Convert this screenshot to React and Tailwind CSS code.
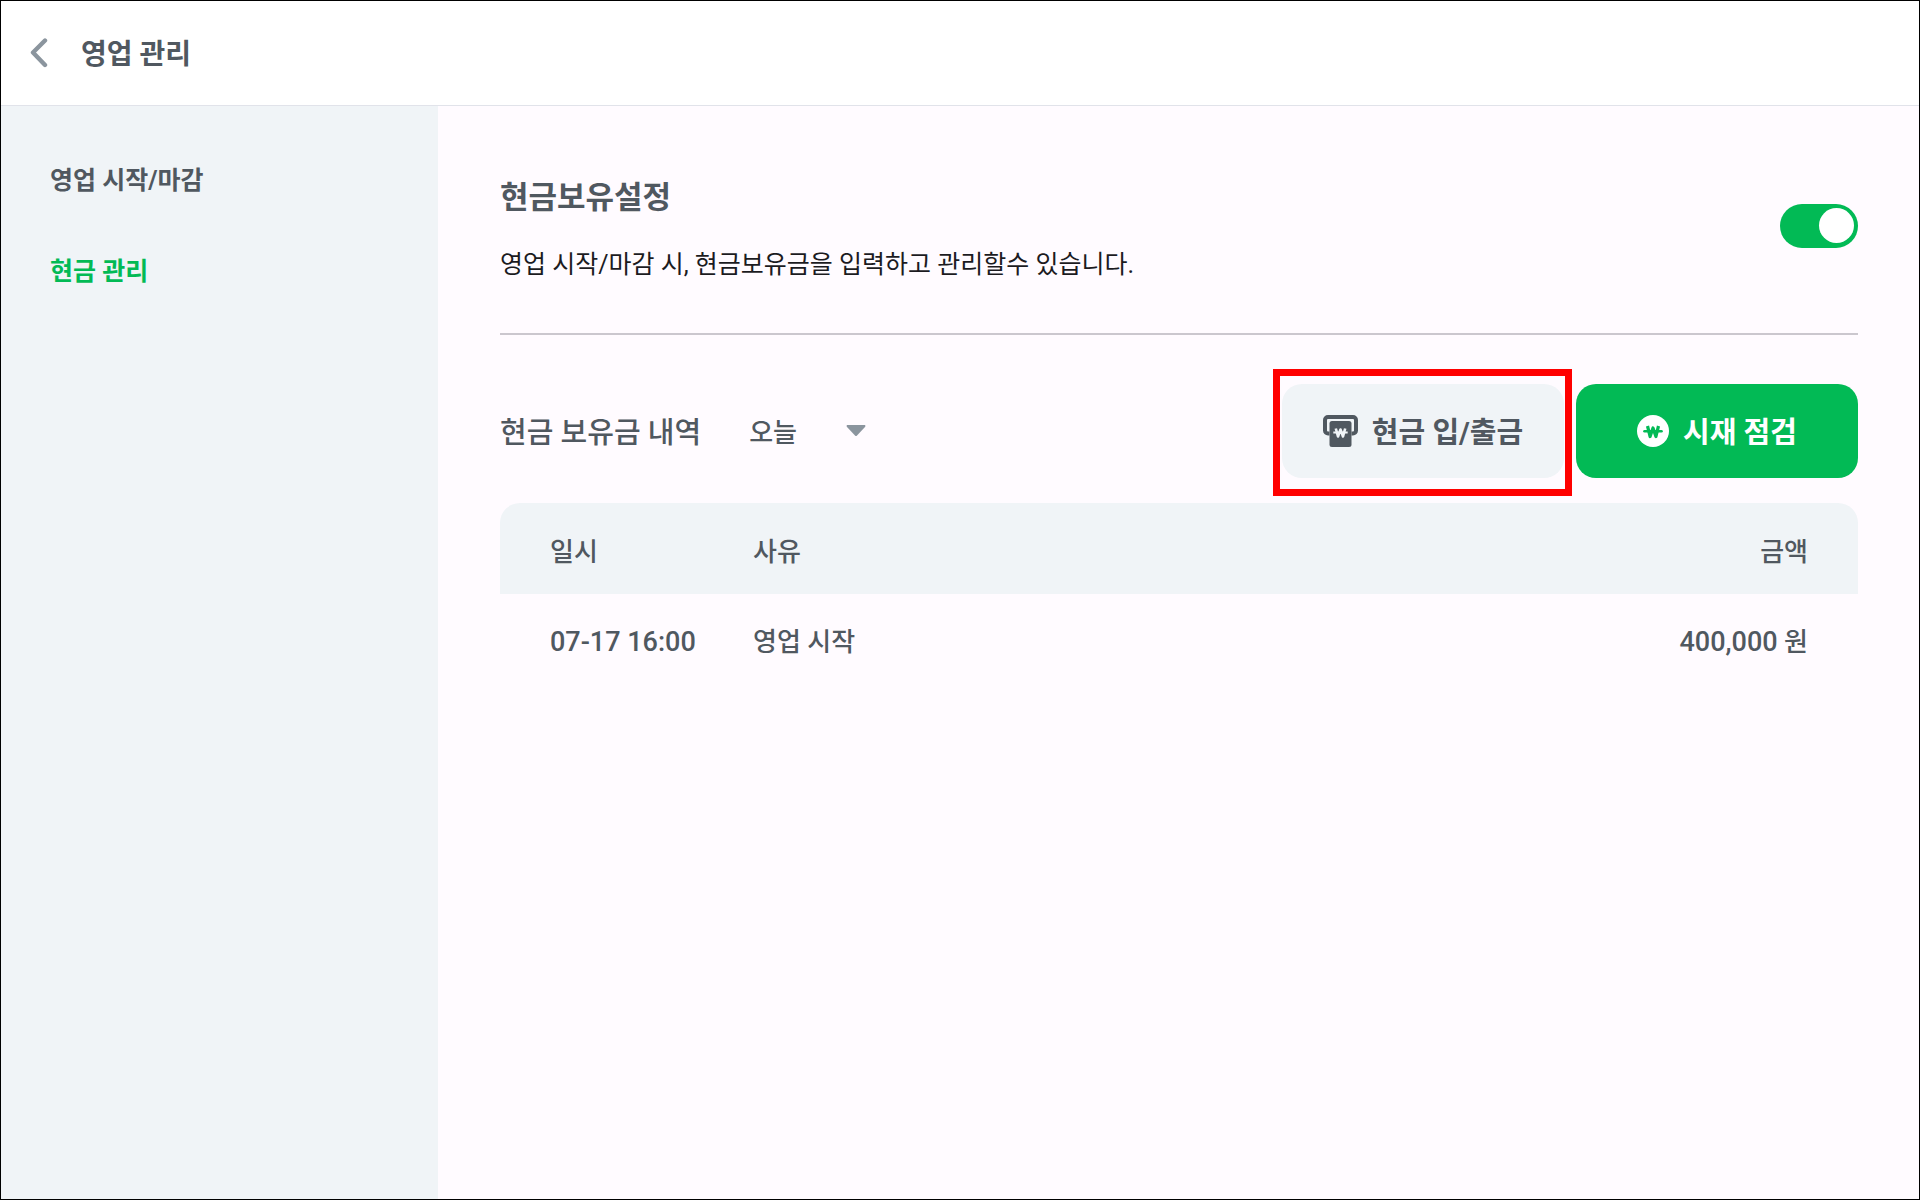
/**
 * Business management screen, cash management tab
 * Cash-holding toggle on top, history of held cash below
 */

import React, { useState } from 'react';

const MENU = [
  { id: 'open-close', label: '영업 시작/마감' },
  { id: 'cash', label: '현금 관리' },
];

const HISTORY = [{ date: '07-17 16:00', reason: '영업 시작', amount: '400,000', unit: '원' }];

function BackIcon() {
  return (
    <svg width="20" height="30" viewBox="0 0 20 30" fill="none" aria-hidden="true">
      <path d="M16 2.500 4 14.500l12 12.500" stroke="#8b959e" strokeWidth="4.400" strokeLinecap="round" strokeLinejoin="round" />
    </svg>
  );
}

function CashSlotIcon() {
  return (
    <svg width="35" height="32" viewBox="0 0 35 32" fill="none" aria-hidden="true">
      <path
        d="M6.500 18.500H5a3 3 0 0 1-3-3V5a3 3 0 0 1 3-3h25a3 3 0 0 1 3 3v10.500a3 3 0 0 1-3 3h-1.500"
        stroke="#505860"
        strokeWidth="4"
      />
      <rect x="6.500" y="6" width="22" height="26" rx="2.500" fill="#505860" />
      <path d="m12.800 13.500 2.200 8 2.500-7 2.500 7 2.200-8" stroke="#f0f4f7" strokeWidth="2.600" strokeLinejoin="round" />
      <path d="M10.300 17.500h14.400" stroke="#f0f4f7" strokeWidth="2" />
    </svg>
  );
}

function WonCoinIcon() {
  return (
    <svg width="32" height="32" viewBox="0 0 32 32" fill="none" aria-hidden="true">
      <circle cx="16" cy="16" r="16" fill="#fff" />
      <path d="m10.500 11 2.600 10.500 2.900-8.500 2.900 8.500 2.600-10.500" stroke="#02ba55" strokeWidth="3.200" strokeLinejoin="round" />
      <path d="M7.500 16.300h17" stroke="#02ba55" strokeWidth="2.600" strokeLinecap="round" />
    </svg>
  );
}

function Header() {
  return (
    <header className="flex h-[105px] items-center border-b border-[#e1e3ea] bg-white pl-7">
      <button type="button" aria-label="뒤로" className="cursor-pointer">
        <BackIcon />
      </button>
      <h1 className="pt-1 pl-8 text-[28px] leading-10 font-bold">영업 관리</h1>
    </header>
  );
}

function Sidebar({ active, onSelect }) {
  return (
    <nav className="w-[437px] shrink-0 bg-[#f0f4f7] px-[49px] pt-[55px]">
      <ul className="flex flex-col gap-[51px]">
        {MENU.map((item) => (
          <li key={item.id}>
            <a
              href={`#${item.id}`}
              onClick={() => onSelect(item.id)}
              className={`block text-[25px] leading-10 font-bold ${active === item.id ? 'text-[#02ba55]' : ''}`}
            >
              {item.label}
            </a>
          </li>
        ))}
      </ul>
    </nav>
  );
}

function CashHoldingSetting() {
  const [enabled, setEnabled] = useState(true);

  return (
    <section className="flex items-center justify-between border-b-2 border-[#cbc7ce] pb-12">
      <div>
        <h2 className="text-[31px] leading-10 font-bold">
          <label htmlFor="cash-holding">현금보유설정</label>
        </h2>
        <p className="pt-[27px] text-[25px] leading-10 text-[#1c1b1f]">
          영업 시작/마감 시, 현금보유금을 입력하고 관리할수 있습니다.
        </p>
      </div>
      <input
        id="cash-holding"
        type="checkbox"
        role="switch"
        checked={enabled}
        onChange={(e) => setEnabled(e.target.checked)}
        className="mb-3 flex h-11 w-[78px] cursor-pointer appearance-none items-center rounded-full bg-gray-300 px-1 before:size-[35px] before:rounded-full before:bg-white checked:justify-end checked:bg-[#02ba55]"
      />
    </section>
  );
}

function HistoryToolbar() {
  return (
    <div className="flex items-center justify-between pt-[49px]">
      <div className="flex items-center gap-12 pt-1">
        <label htmlFor="period" className="text-[29px] leading-10 font-medium">
          현금 보유금 내역
        </label>
        <div className="relative">
          <select
            id="period"
            className="w-[117px] cursor-pointer appearance-none bg-transparent text-[26px] leading-10 font-medium"
          >
            <option>오늘</option>
            <option>어제</option>
          </select>
          <svg
            width="20"
            height="12"
            viewBox="0 0 20 12"
            className="pointer-events-none absolute top-3 right-0"
            aria-hidden="true"
          >
            <path d="M1 0h18q1 .8 0 2l-8 8.500q-1 1-2 0L1 2q-1-1.200 0-2Z" fill="#8b959e" />
          </svg>
        </div>
      </div>
      <div className="flex gap-3">
        <div className="relative">
          <button
            type="button"
            className="flex h-[94px] w-[282px] cursor-pointer items-center justify-center gap-3.5 rounded-[20px] bg-[#f0f4f7] text-[29px] leading-10 font-bold"
          >
            <CashSlotIcon />
            <span className="pt-1">현금 입/출금</span>
          </button>
          <div className="pointer-events-none absolute -top-[15px] -right-2 -bottom-[18px] -left-[9px] border-[7px] border-[#ff0000]" />
        </div>
        <button
          type="button"
          className="flex h-[94px] w-[282px] cursor-pointer items-center justify-center gap-3.5 rounded-[20px] bg-[#02ba55] text-[29px] leading-10 font-bold text-white"
        >
          <WonCoinIcon />
          <span className="pt-1">시재 점검</span>
        </button>
      </div>
    </div>
  );
}

function HistoryTable({ rows }) {
  return (
    <table className="mt-[25px] w-full table-fixed border-separate border-spacing-0 text-[26px] leading-10">
      <thead>
        <tr className="h-[91px] text-left">
          <th className="w-[253px] rounded-tl-[20px] bg-[#f0f4f7] pt-1.5 pl-[50px] font-medium">일시</th>
          <th className="bg-[#f0f4f7] pt-1.5 font-medium">사유</th>
          <th className="rounded-tr-[20px] bg-[#f0f4f7] pt-1.5 pr-[50px] text-right font-medium">금액</th>
        </tr>
      </thead>
      <tbody>
        {rows.map((row) => (
          <tr key={row.date} className="h-[96px] font-medium">
            <td className="pl-[50px] text-[27px]">{row.date}</td>
            <td>{row.reason}</td>
            <td className="pr-[50px] text-right">
              <span className="text-[27px]">{row.amount}</span> {row.unit}
            </td>
          </tr>
        ))}
      </tbody>
    </table>
  );
}

export default function App() {
  const [active, setActive] = useState('cash');

  return (
    <div className="flex min-h-screen flex-col border border-black bg-[#fffbff] font-[Roboto,'Noto_Sans_CJK_KR',sans-serif] text-[#505860]">
      <Header />
      <div className="flex grow">
        <Sidebar active={active} onSelect={setActive} />
        <main className="grow pt-[72px] pr-[61px] pl-[62px]">
          <CashHoldingSetting />
          <HistoryToolbar />
          <HistoryTable rows={HISTORY} />
        </main>
      </div>
    </div>
  );
}
